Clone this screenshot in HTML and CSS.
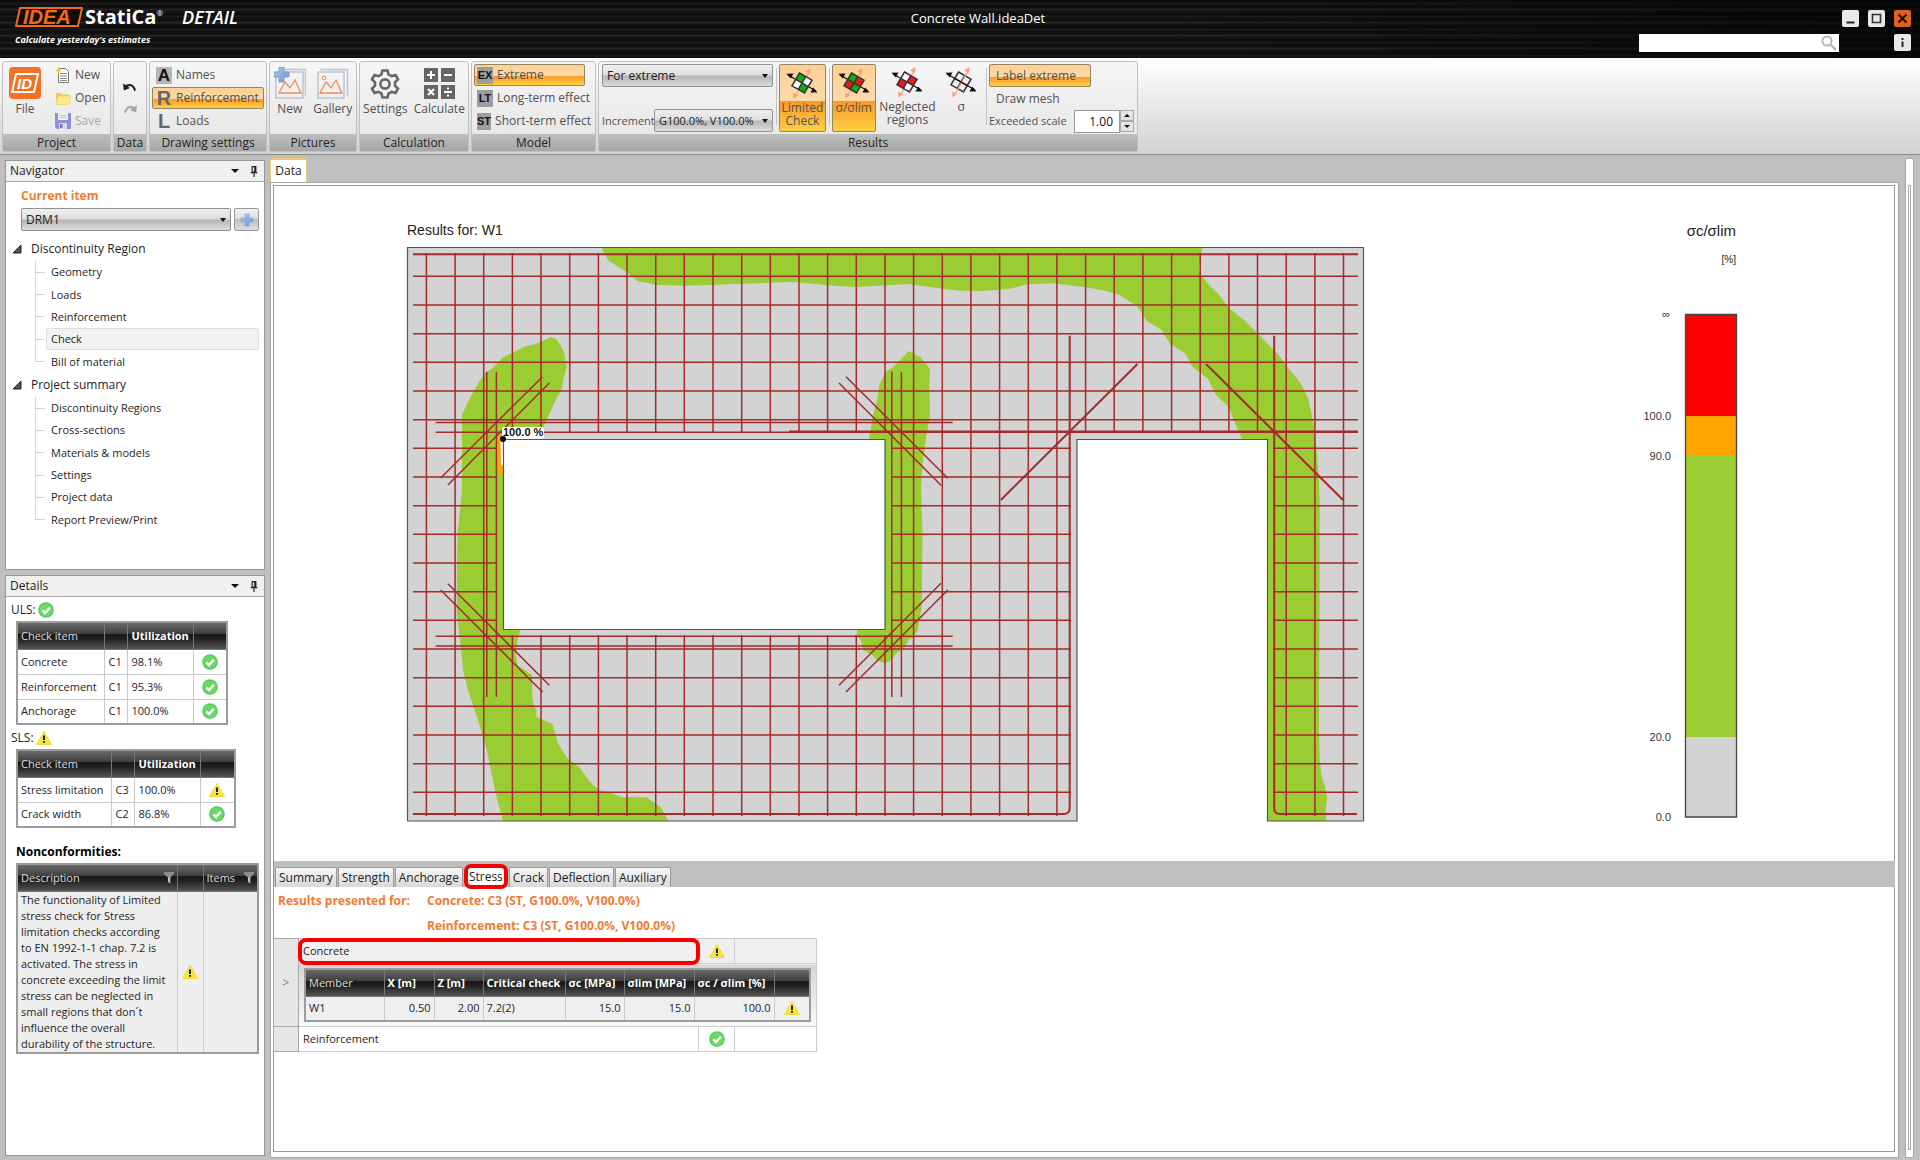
FILE: index.html
```html
<!DOCTYPE html>
<html lang="en">
<head>
<meta charset="utf-8">
<title>Concrete Wall.ideaDet</title>
<link rel="stylesheet" href="styles.css">
</head>
<body>
<svg class="defs" aria-hidden="true">
  <defs>
    <linearGradient id="blue" x1="0" y1="0" x2="1" y2="1"><stop offset="0" stop-color="#b4cdec"/><stop offset="1" stop-color="#5f93cf"/></linearGradient>
    <symbol id="ok" viewBox="0 0 16 16"><circle cx="8" cy="8" r="7.8" fill="#58cb58"/><circle cx="8" cy="8" r="6.4" fill="#6bd968"/><path d="M4.4 8.4l2.6 2.6 4.8-5.2" fill="none" stroke="#fff" stroke-width="2.4"/></symbol>
    <symbol id="warn" viewBox="0 0 16 16"><path d="M8 1.6L15.4 14.4H.6z" fill="#f7e73c" stroke="#ecd93a" stroke-width="1" stroke-linejoin="round"/><path d="M8 5.4v4.6" stroke="#222" stroke-width="2"/><path d="M7 11h2v1.800H7z" fill="#222"/></symbol>
    <symbol id="plus" viewBox="0 0 14 14"><path d="M5 1h4v4h4v4H9v4H5V9H1V5h4z" fill="url(#blue)" stroke="#86aedb" stroke-width=".8"/></symbol>
    <symbol id="pin" viewBox="0 0 8 12"><path d="M2 .7h4v6H2zM4.900 1v6M.4 7.300h7.200M4 7.500V12" fill="none" stroke="#222" stroke-width="1.300"/></symbol>
    <symbol id="funnel" viewBox="0 0 10 12"><path d="M0 0h10v2L6.500 5.500V12L4 10V5.500L0 2z" fill="#8a8a8a"/><path d="M4.500 5h1v6l-1-1z" fill="#eee"/></symbol>
    <symbol id="twist" viewBox="0 0 10 10"><path d="M9 1v8H1z" fill="#555" stroke="#222" stroke-width="1"/></symbol>
    <symbol id="arrows" viewBox="0 0 32 32">
      <path d="M10 28L23 5" stroke="#f9a37c" stroke-width="1.300"/><path d="M24.500 1l-.4 6-5-2.600zM7 31.500l.3-6 5 2.800z" fill="#f9a37c"/>
      <path d="M2 8l28 16" stroke="#111" stroke-width="1.200"/><path d="M.5 6.800l7-.2-2.700 5zM31.500 25.400l-7 .2 2.700-5z" fill="#111"/>
    </symbol>
    <symbol id="stress-box" viewBox="0 0 32 32"><path d="M13.500 6L26 13.200 18.500 26 6 18.800zM9.800 12.400l12.400 7.200M19.700 9.600l-7.400 12.800" fill="none" stroke="#333" stroke-width="1.500"/></symbol>
  </defs>
</svg>

<header class="titlebar">
  <div class="brand">
    <div class="brand-row">
      <svg class="logo" viewBox="0 0 70 22" role="img" aria-label="IDEA"><path d="M5 2h62l-4 18H1z" fill="#140a04" stroke="#f26b16" stroke-width="2" stroke-linejoin="round"/><text x="8" y="18" class="logo-text">IDEA</text></svg>
      <span class="brand-name">StatiCa<sup>®</sup></span>
      <span class="brand-app">DETAIL</span>
    </div>
    <div class="slogan">Calculate yesterday's estimates</div>
  </div>
  <h1 class="doc-title">Concrete Wall.ideaDet</h1>
  <div class="win">
    <div class="win-row">
      <button class="wbtn" aria-label="Minimize"><svg viewBox="0 0 17 17"><path d="M4.500 12.500h8" stroke="#222" stroke-width="2"/></svg></button>
      <button class="wbtn" aria-label="Maximize"><svg viewBox="0 0 17 17"><path d="M4.500 4.500h8v8h-8z" fill="none" stroke="#333" stroke-width="1.600"/></svg></button>
      <button class="wbtn close" aria-label="Close"><svg viewBox="0 0 17 17"><path d="M4.500 4.500l8 8M12.500 4.500l-8 8" stroke="#1a0a00" stroke-width="2"/></svg></button>
    </div>
    <div class="win-row">
      <label class="search"><input type="text" aria-label="Search"><svg viewBox="0 0 16 16"><circle cx="6" cy="6" r="4.600" fill="none" stroke="#b8b8b8" stroke-width="2"/><path d="M9.500 9.500L15 15" stroke="#b8b8b8" stroke-width="2.400"/></svg></label>
      <button class="wbtn" aria-label="Info"><svg viewBox="0 0 17 17"><path d="M8.500 4v2M8.500 7.500v5.500" stroke="#222" stroke-width="2"/></svg></button>
    </div>
  </div>
</header>

<div class="ribbon">
  <section class="group g-project">
    <div class="body">
      <button class="big"><svg class="file-icon" viewBox="0 0 32 32"><rect width="32" height="32" rx="4" fill="#f47022"/><path d="M7 7h22l-4 18H3z" fill="none" stroke="#fff" stroke-width="2"/><text x="8" y="22" class="file-text">ID</text></svg>File</button>
      <div class="sep"></div>
      <div class="stack">
        <button class="item"><svg class="i16" viewBox="0 0 16 16"><path d="M3.500 1.500h7l3 3v11h-10z" fill="#fff" stroke="#777"/><path d="M5 6.500h7M5 9h7M5 11.500h7M5 13.500h7" stroke="#888"/><path d="M3.500 0l1 2.500L7 3.500l-2.500 1-1 2.500-1-2.500L0 3.500l2.500-1z" fill="#f9c23c"/></svg>New</button>
        <button class="item"><svg class="i16" viewBox="0 0 16 16"><path d="M1 14V3h5l1 1.500h7V14z" fill="#eecb45"/><path d="M.5 14.500L3 6h12.800L14 14.500z" fill="#fbe98a" stroke="#e9ce58" stroke-width=".6"/></svg>Open</button>
        <button class="item off"><svg class="i16" viewBox="0 0 16 16"><path d="M0 0h16v16H2l-2-2z" fill="#7f7fdc"/><path d="M3 0h10v7H3z" fill="#f0f0e0"/><path d="M4 10h8v6H4z" fill="#d8d8e8"/><path d="M5 11h2.500v4H5z" fill="#5d5db8"/><path d="M4.500 2.500h7M4.500 4.500h7" stroke="#bbb"/></svg>Save</button>
      </div>
    </div>
    <h2>Project</h2>
  </section>
  <section class="group g-data">
    <div class="body undo">
      <button aria-label="Undo"><svg viewBox="0 0 16 11"><path d="M0 1l1 8 7-3-2.500-1.500Q10 2 13 10q2-1 1.500-3Q11 -1 3 2.500z" fill="#222"/></svg></button>
      <button aria-label="Redo" class="off"><svg viewBox="0 0 16 11"><path d="M16 1l-1 8-7-3 2.500-1.500Q6 2 3 10 1 9 1.500 7 5 -1 13 2.500z" fill="#999"/></svg></button>
    </div>
    <h2>Data</h2>
  </section>
  <section class="group g-draw">
    <div class="body stack">
      <button class="item"><span class="glyph boxed">A</span>Names</button>
      <button class="item on"><span class="glyph">R</span>Reinforcement</button>
      <button class="item"><span class="glyph">L</span>Loads</button>
    </div>
    <h2>Drawing settings</h2>
  </section>
  <section class="group g-pics">
    <div class="body even">
      <button class="big"><svg class="i30" viewBox="0 0 32 32"><path d="M5.500 2.500h26v27M3 5h26v26H2V6z" fill="none" stroke="#b9c3d3" stroke-width="1.500"/><path d="M5 26l6-11 5 6 5-8 6 13z" fill="none" stroke="#f58a55" stroke-width="1.300"/><path d="M5 0h5v5h5v5h-5v5H5v-5H0V5h5z" fill="url(#blue)" stroke="#6d9bd0" stroke-width=".8"/></svg>New</button>
      <button class="big"><svg class="i30" viewBox="0 0 32 32"><path d="M3.500 2.500h27v27M1 5h26v26H1z" fill="none" stroke="#b9c3d3" stroke-width="1.500"/><path d="M3 26l6-11 5 6 5-8 6 13z" fill="none" stroke="#f58a55" stroke-width="1.300"/><circle cx="7" cy="11" r="2" fill="none" stroke="#f58a55"/></svg>Gallery</button>
    </div>
    <h2>Pictures</h2>
  </section>
  <section class="group g-calc">
    <div class="body even">
      <button class="big"><svg class="i30" viewBox="0 0 32 32"><path d="M13.500 3.500h5l1 4 3 1.700 4-1.200 2.500 4.300-3 3v3.400l3 3-2.500 4.300-4-1.200-3 1.700-1 4h-5l-1-4-3-1.700-4 1.200L3 21.700l3-3v-3.400l-3-3L5.500 8l4 1.200 3-1.700z" fill="none" stroke="#666" stroke-width="2.600"/><circle cx="16" cy="17" r="4.600" fill="none" stroke="#666" stroke-width="2.600"/></svg>Settings</button>
      <button class="big"><svg class="i30" viewBox="0 0 32 32"><path d="M1 1h14v14H1zM18 1h14v14H18zM1 18h14v14H1zM18 18h14v14H18z" fill="#666"/><path d="M8 4v8M4 8h8M21 8h8M5 22l6 6M11 22l-6 6M21 25h8M25 20.500v2M25 27.500v2" stroke="#fff" stroke-width="2"/></svg>Calculate</button>
    </div>
    <h2>Calculation</h2>
  </section>
  <section class="group g-model">
    <div class="body stack">
      <button class="item on short"><span class="glyph code">EX</span>Extreme</button>
      <button class="item"><span class="glyph code">LT</span>Long-term effect</button>
      <button class="item"><span class="glyph code">ST</span>Short-term effect</button>
    </div>
    <h2>Model</h2>
  </section>
  <section class="group g-results">
    <div class="body">
      <div class="picks">
        <span class="select"><select aria-label="Results for"><option>For extreme</option></select></span>
        <div class="inc"><label for="inc">Increment</label><span class="select"><select id="inc"><option>G100.0%, V100.0%</option></select></span></div>
      </div>
      <div class="sep"></div>
      <button class="big tall on"><svg class="i30" viewBox="0 0 32 32"><use href="#arrows"/><path d="M13.500 6L26 13.200 18.500 26 6 18.800z" fill="#fff"/><path d="M13.500 6l6.200 3.600-3.700 6.400-6.200-3.600zM16 16l6.200 3.600-3.700 6.400-6.200-3.600z" fill="#0db10d"/><use href="#stress-box"/></svg>Limited<br>Check</button>
      <div class="sep"></div>
      <button class="big tall on slim"><svg class="i30" viewBox="0 0 32 32"><use href="#arrows"/><path d="M13.500 6l6.200 3.600-3.700 6.400-6.200-3.600zM16 16l6.200 3.600-3.700 6.400-6.200-3.600z" fill="#0db10d"/><path d="M19.700 9.600l6.300 3.600-3.800 6.400L16 16zM9.800 12.400L16 16l-3.700 6.400L6 18.800z" fill="#f01818"/><use href="#stress-box"/></svg>σ/σlim</button>
      <button class="big tall wide"><svg class="i30" viewBox="0 0 32 32"><use href="#arrows"/><path d="M13.500 6L26 13.200 18.500 26 6 18.800z" fill="#fff"/><path d="M19.700 9.600l6.300 3.600-3.800 6.400L16 16zM9.800 12.400L16 16l-3.700 6.400L6 18.800z" fill="#f01818"/><use href="#stress-box"/></svg>Neglected<br>regions</button>
      <button class="big tall slim"><svg class="i30" viewBox="0 0 32 32"><use href="#stress-box"/><use href="#arrows"/></svg>σ</button>
      <div class="sep"></div>
      <div class="opts">
        <button class="opt on">Label extreme</button>
        <button class="opt">Draw mesh</button>
        <div class="scale"><label for="scale">Exceeded scale</label><input id="scale" type="text" value="1.00"><span class="spin"><button aria-label="Increase" class="up"></button><button aria-label="Decrease" class="down"></button></span></div>
      </div>
    </div>
    <h2>Results</h2>
  </section>
</div>

<div class="work">
  <aside class="side">
    <section class="panel navigator">
      <header><h2>Navigator</h2><span class="caret"></span><svg class="pin"><use href="#pin"/></svg></header>
      <div class="nav-body">
        <label class="current" for="current">Current item</label>
        <div class="current-row"><span class="select"><select id="current"><option>DRM1</option></select></span><button class="add" aria-label="Add"><svg><use href="#plus"/></svg></button></div>
        <nav>
          <div class="branch"><svg><use href="#twist"/></svg>Discontinuity Region</div>
          <ul class="five">
            <li><a href="#">Geometry</a></li><li><a href="#">Loads</a></li><li><a href="#">Reinforcement</a></li><li><a href="#" class="sel">Check</a></li><li><a href="#">Bill of material</a></li>
          </ul>
          <div class="branch"><svg><use href="#twist"/></svg>Project summary</div>
          <ul class="six">
            <li><a href="#">Discontinuity Regions</a></li><li><a href="#">Cross-sections</a></li><li><a href="#">Materials &amp; models</a></li><li><a href="#">Settings</a></li><li><a href="#">Project data</a></li><li><a href="#">Report Preview/Print</a></li>
          </ul>
        </nav>
      </div>
    </section>
    <section class="panel details">
      <header><h2>Details</h2><span class="caret"></span><svg class="pin"><use href="#pin"/></svg></header>
      <div class="det-body">
        <div class="state">ULS: <svg class="st"><use href="#ok"/></svg></div>
        <table class="grid uls">
          <colgroup><col class="c-name"><col class="c-code"><col class="c-util"><col></colgroup>
          <thead><tr><th class="plain">Check item</th><th></th><th>Utilization</th><th></th></tr></thead>
          <tbody>
            <tr><td>Concrete</td><td>C1</td><td>98.1%</td><td class="ic"><svg class="st"><use href="#ok"/></svg></td></tr>
            <tr><td>Reinforcement</td><td>C1</td><td>95.3%</td><td class="ic"><svg class="st"><use href="#ok"/></svg></td></tr>
            <tr><td>Anchorage</td><td>C1</td><td>100.0%</td><td class="ic"><svg class="st"><use href="#ok"/></svg></td></tr>
          </tbody>
        </table>
        <div class="state">SLS: <svg class="st"><use href="#warn"/></svg></div>
        <table class="grid sls">
          <colgroup><col class="c-name"><col class="c-code"><col class="c-util"><col></colgroup>
          <thead><tr><th class="plain">Check item</th><th></th><th>Utilization</th><th></th></tr></thead>
          <tbody>
            <tr><td>Stress limitation</td><td>C3</td><td>100.0%</td><td class="ic"><svg class="st"><use href="#warn"/></svg></td></tr>
            <tr><td>Crack width</td><td>C2</td><td>86.8%</td><td class="ic"><svg class="st"><use href="#ok"/></svg></td></tr>
          </tbody>
        </table>
        <h3>Nonconformities:</h3>
        <table class="grid non">
          <colgroup><col class="c-desc"><col class="c-warn"><col></colgroup>
          <thead><tr><th class="plain"><span class="fl">Description<svg><use href="#funnel"/></svg></span></th><th></th><th class="plain"><span class="fl">Items<svg><use href="#funnel"/></svg></span></th></tr></thead>
          <tbody><tr><td>The functionality of Limited<br>stress check for Stress<br>limitation checks according<br>to EN 1992-1-1 chap. 7.2 is<br>activated. The stress in<br>concrete exceeding the limit<br>stress can be neglected in<br>small regions that don´t<br>influence the overall<br>durability of the structure.</td><td class="ic"><svg class="st"><use href="#warn"/></svg></td><td></td></tr></tbody>
        </table>
      </div>
    </section>
  </aside>

  <main class="center">
    <div class="page-tabs"><button class="page-tab">Data</button></div>
    <div class="frame">
      <svg class="drawing" viewBox="274 186 1620 675" role="img" aria-label="Results for W1">
        <text x="407" y="235" class="t14">Results for: W1</text>
        <path d="M407 247h957v574h-96V439h-191v382H407zM503 439v190.500h382V439z" fill="#d3d3d3" fill-rule="evenodd"/>
        <g fill="#9acd32">
          <path d="M600.700 247L608.900 261 627 272 637.500 281 656 284.700 684.600 285.700 790 282 799 282.500 836.400 286 856.800 287 908 284 942.500 288.700 960.500 290.700 982.600 291 1008.400 289 1028.400 284.300 1053 283.300 1085.500 287.300 1106.500 291 1119.600 295 1137.500 306.700 1146.800 321 1161.600 330 1170 343.700 1185.700 353.700 1192.600 367 1208 378.700 1215.700 394.700 1228.800 406.700 1234 421 1241.900 439 1268 439 1268 821 1325.900 821 1325.900 810 1327 796.700 1325 786 1321.800 776.700 1319.700 760 1319 730 1319.500 600 1319.700 506.700 1319 480 1317 453 1315 433 1311.400 413 1308 398 1300.400 382.700 1286.300 365.700 1278.700 355 1258 334 1246 321.700 1229 308 1218.500 294 1208 284 1201 275 1198.800 269 1202.600 247z"/>
          <path d="M550.700 337L556 339 560.700 345 564 353 566.800 366.700 562.900 381.700 561.400 391 557 396.700 549 415 543.600 426.700 541.800 439 503 439 503 629.500 520.700 629.500 517.900 638.300 515.700 653.300 517.500 665 532 675 532.500 700.700 536.400 710 536.400 716.700 552.500 724.300 557.900 743 566.800 757.700 580 768 590 782 599 790 611.400 793.300 622 797.300 646.400 797.300 660.700 807.300 668.600 821 503 821 496 795 486.400 748 475.700 713 467.900 690 463 670 461.400 651.700 456.800 613 457 560 457.900 530 461.800 493 462 415 467.900 401.700 479 381.700 486.400 371.700 491.800 369 502.500 357.700 526.800 345.700 532.900 345 547 339z"/>
          <path d="M908.900 351L921 357.700 930 369 929.300 388 930 415 925.700 440 922.900 463 921 486.700 922.500 533 921.800 606.700 917.900 630 913 637.700 908.600 640 904 649 897 652.700 890 660.700 885.400 663.300 877.500 660.700 871.400 654 864 650.700 860.700 640 857 635 857 629.500 885 629.500 885 439 869 439 872.900 416.700 877.500 398 879.300 385 885.400 372 893.600 366.700z"/>
        </g>
        <path d="M501 432l-4 5v31l6 8v-8l-2-4v-24l2-2z" fill="#ffa500"/><path d="M500.500 440h2.500v27l-2-3z" fill="#fff"/>
        <g fill="none" stroke="#a52a2a" stroke-width="1.500">
          <path d="M426.400 253V816M455.100 253V816M483.700 253V816M913.600 253V816M942.300 253V816M970.900 253V816M999.600 253V816M1028.300 253V816M1056.900 253V816M1286.200 253V816M1314.900 253V816M1343.500 253V816"/>
          <path d="M512.400 253V433M541 253V433M569.700 253V433M598.400 253V433M627 253V433M655.700 253V433M684.300 253V433M713 253V433M741.700 253V433M770.300 253V433M799 253V433M827.600 253V433M856.300 253V433M885 253V433M512.400 635V816M541 635V816M569.700 635V816M598.400 635V816M627 635V816M655.700 635V816M684.300 635V816M713 635V816M741.700 635V816M770.300 635V816M799 635V816M827.600 635V816M856.300 635V816M885 635V816"/>
          <path d="M1085.600 253V433M1114.200 253V433M1142.900 253V433M1171.600 253V433M1200.200 253V433M1228.900 253V433M1257.500 253V433"/>
          <path d="M413 276.300H1358M413 305H1358M413 333.700H1358M413 362.300H1358M413 391H1358M413 419.700H1358"/>
          <path d="M413 448.300H497M413 477H497M413 505.700H497M413 534.300H497M413 563H497M413 591.700H497M413 620.300H497M891 448.300H1071M891 477H1071M891 505.700H1071M891 534.300H1071M891 563H1071M891 591.700H1071M891 620.300H1071"/>
          <path d="M413 649H1071M413 677.700H1071M413 706.300H1071M413 735H1071M413 763.700H1071M413 792.300H1071"/>
          <path d="M1273 448.300H1358M1273 477H1358M1273 505.700H1358M1273 534.300H1358M1273 563H1358M1273 591.700H1358M1273 620.300H1358M1273 649H1358M1273 677.700H1358M1273 706.300H1358M1273 735H1358M1273 763.700H1358M1273 792.300H1358"/>
          <path d="M486.800 371.700V697M496.400 371.700V697M891.800 371.700V697M901.400 371.700V697M435.700 422.500H952.600M435.700 432.300H952.600M435.700 636.300H952.600M435.700 646H952.600"/>
          <path d="M542.500 376.700L440.700 478M549.300 383L447.900 485M846 376.700L947.800 478.300M839 383L941 485.300M447.900 583.700L549.300 685.300M440.700 590L542.500 692M941 583.300L839 685.300M947.800 590L846 692"/>
        </g>
        <g fill="none" stroke="#a52a2a" stroke-width="2">
          <path d="M413 254.300H1358M1137.500 364L1000.800 500M1206 364L1343 500"/>
          <path d="M1069.700 335.700V808q0 6-6 6H413M1274.200 335.700V808q0 6 6 6H1357"/>
          <path d="M789 431.700H1358" stroke-width="2.600"/>
        </g>
        <path d="M407.500 247.500h956v573.500h-96V439.500h-190.500v381.500H407.500zM503.500 439.500v190h381.500v-190z" fill="none" stroke="#555" stroke-width="1.200"/>
        <rect x="502" y="427" width="42" height="12" rx="2" fill="#fff"/><text x="503" y="436" class="t11b">100.0 %</text><circle cx="503" cy="439" r="3" fill="#000"/>
        <text x="1736" y="236" class="t15 end">σc/σlim</text>
        <text x="1736" y="263" class="t10 end">[%]</text>
        <path d="M1685.500 314.500h51v101.500h-51z" fill="red"/><path d="M1685.500 416h51v40h-51z" fill="orange"/><path d="M1685.500 456h51v281h-51z" fill="#9acd32"/><path d="M1685.500 737h51v80h-51z" fill="#d3d3d3"/>
        <path d="M1685.500 314.500h51v502.500h-51z" fill="none" stroke="#444" stroke-width="1.300"/>
        <g class="t11 end"><text x="1670" y="318">∞</text><text x="1671" y="420">100.0</text><text x="1671" y="460">90.0</text><text x="1671" y="741">20.0</text><text x="1671" y="821">0.0</text></g>
      </svg>
      <div class="tabs">
        <button>Summary</button><button>Strength</button><button>Anchorage</button><button class="active">Stress</button><button>Crack</button><button>Deflection</button><button>Auxiliary</button>
      </div>
      <div class="results">
        <dl class="presented"><dt>Results presented for:</dt><dd>Concrete: C3 (ST, G100.0%, V100.0%)</dd><dd>Reinforcement: C3 (ST, G100.0%, V100.0%)</dd></dl>
        <table class="outer">
          <colgroup><col class="o-head"><col class="o-name"><col class="o-icon"><col></colgroup>
          <tbody>
            <tr class="shade"><th rowspan="2">&gt;</th><td class="mark">Concrete</td><td class="ic"><svg class="st"><use href="#warn"/></svg></td><td></td></tr>
            <tr class="shade"><td colspan="3" class="nest">
              <table class="grid member">
                <colgroup><col class="m1"><col class="m2"><col class="m3"><col class="m4"><col class="m5"><col class="m6"><col class="m7"><col></colgroup>
                <thead><tr><th class="plain">Member</th><th>X [m]</th><th>Z [m]</th><th>Critical check</th><th>σc [MPa]</th><th>σlim [MPa]</th><th>σc / σlim [%]</th><th></th></tr></thead>
                <tbody><tr><td>W1</td><td class="num">0.50</td><td class="num">2.00</td><td>7.2(2)</td><td class="num">15.0</td><td class="num">15.0</td><td class="num">100.0</td><td class="ic"><svg class="st"><use href="#warn"/></svg></td></tr></tbody>
              </table>
            </td></tr>
            <tr><th></th><td>Reinforcement</td><td class="ic"><svg class="st"><use href="#ok"/></svg></td><td></td></tr>
          </tbody>
        </table>
      </div>
    </div>
  </main>
  <div class="dock"><div></div></div>
</div>
</body>
</html>
```
FILE: styles.css
```css
* { box-sizing: border-box; }
body { margin: 0; min-height: 100vh; display: flex; flex-direction: column; background: #bfbfbf; font: 12px/16px "Open Sans", "Noto Sans", sans-serif; color: #1e1e1e; }
button, input, select { font: inherit; color: inherit; margin: 0; padding: 0; border: 0; background: none; border-radius: 0; }
h1, h2, h3, ul, dl, dd { margin: 0; padding: 0; font-size: 12px; }
h1, h2 { font-weight: 400; }
svg { display: block; }
.defs { position: absolute; width: 0; height: 0; }

/* title bar */
.titlebar { display: grid; grid-template-columns: 1fr auto 1fr; height: 58px; color: #fff;
  background: linear-gradient(90deg, transparent 60%, rgba(0,0,0,.6)), repeating-linear-gradient(180deg, #0c0c0c 0 2px, #1c1c1c 3px 4px, #101010 5px 8px, #242424 9px 10px, #131313 11px 13px), #111; }
.brand { padding: 6px 0 0 15px; }
.brand-row { display: flex; align-items: center; height: 22px; }
.logo { width: 70px; height: 22px; overflow: visible; }
.logo-text { font: italic 700 20px "Liberation Sans", sans-serif; fill: #f26b16; }
.brand-name { font: 700 20px/22px "Open Sans", sans-serif; }
.brand-name sup { font-size: 8px; font-weight: 400; line-height: 8px; vertical-align: 8px; }
.brand-app { margin-left: 19px; font: italic 600 18px/22px "Open Sans", sans-serif; }
.slogan { padding-top: 5px; font: italic 700 9px/14px "Open Sans", sans-serif; }
.doc-title { padding: 10px 0 0 36px; font-size: 13px; }
.win { display: flex; flex-direction: column; gap: 7px; align-items: flex-end; padding: 10px 9px 0 0; }
.win-row { display: flex; gap: 9px; }
.wbtn { width: 17px; height: 17px; border-radius: 2px; background: #e9e9e9; }
.wbtn.close { background: #dd6420; }
.search { position: relative; width: 200px; height: 18px; margin-right: 46px; background: #fff; }
.search input { width: 100%; height: 18px; }
.search svg { position: absolute; right: 2px; top: 1px; width: 16px; height: 16px; }

/* ribbon */
.ribbon { display: flex; gap: 2px; height: 97px; padding: 3px 2px 2px; border-bottom: 1px solid #8c8c8c; background: linear-gradient(#fff, #d2d2d2); }
.group { display: flex; flex-direction: column; border: 1px solid #c0c0c0; border-radius: 3px; background: linear-gradient(#f6f6f6, #e6e4e5); color: #505050; }
.group h2 { height: 17px; line-height: 17px; text-align: center; color: #222; background: linear-gradient(#bcbfbe, #a4a7a6); }
.body { flex: 1; display: flex; padding: 2px 3px 0; }
.g-project { width: 109px; } .g-data { width: 34px; } .g-draw { width: 118px; } .g-pics { width: 88px; }
.g-calc { width: 110px; } .g-model { width: 125px; } .g-results { width: 540px; }
.stack { display: flex; flex-direction: column; gap: 1px; }
.item { display: flex; align-items: center; gap: 4px; height: 22px; padding: 0 3px; border: 1px solid transparent; border-radius: 2px; white-space: nowrap; }
.on { border: 1px solid #92855f; border-radius: 2px; background: linear-gradient(#fcd096, #fddaa8 55%, #f9982d 55%, #ffd040); }
.short { width: 111px; }
.off { color: #a8a8a8; }
.off svg { opacity: .85; }
.i16 { width: 16px; height: 16px; }
.i30 { width: 32px; height: 32px; }
.g-project .body { padding-left: 4px; }
.big { display: flex; flex-direction: column; align-items: center; line-height: 13px; padding-top: 3px; gap: 3px; }
.g-project .big { padding-left: 2px; }
.file-icon { width: 32px; height: 32px; }
.file-text { font: italic 700 15px "Liberation Sans", sans-serif; fill: #fff; }
.sep { width: 1px; margin: 4px 4px 9px 6px; background: #c4c4c4; }
.undo { flex-direction: column; align-items: center; gap: 11px; padding-top: 20px; }
.undo svg { width: 14px; height: 11px; }
.even { justify-content: space-around; padding: 2px 0 0; }
.glyph { width: 16px; height: 17px; font: 900 20px/17px "Liberation Sans", sans-serif; text-align: center; color: #666; }
.glyph.boxed { background: #b4b4b4; color: #111; font-size: 17px; }
.glyph.code { background: #9d9d9d; color: #111; font-size: 11px; }
.g-draw .body, .g-model .body { padding: 2px 2px 0; }
.g-model .item { padding: 0 2px; }
.g-results .sep { margin: 4px 2px 9px 3px; }
.picks { display: flex; flex-direction: column; gap: 22px; width: 172px; }
.select { position: relative; display: flex; flex: 1; height: 23px; }
.picks > .select { flex: none; }
.select select { flex: 1; min-width: 0; appearance: none; padding: 0 4px; color: #222; border: 1px solid #919191; border-radius: 2px; background: linear-gradient(#f0f0f0, #dedede 48%, #b5b5b5 52%, #dcdcdc); }
.select::after { content: ""; position: absolute; right: 5px; top: 10px; border: 3px solid transparent; border-top: 4px solid #111; border-bottom: 0; }
.inc { display: flex; align-items: center; font-size: 11px; }
.inc label { width: 52px; white-space: nowrap; }
.tall { height: 68px; width: 47px; padding-top: 2px; gap: 2px; }
.slim { width: 44px; } .wide { width: 64px; }
.opts { display: flex; flex-direction: column; }
.opt { width: 102px; height: 23px; padding: 0 7px; text-align: left; }
.opt.on { padding: 0 6px; }
.scale { display: flex; align-items: center; height: 22px; }
.scale label { width: 85px; white-space: nowrap; font-size: 11px; }
.scale input { width: 46px; height: 23px; padding-right: 6px; text-align: right; color: #111; background: #fff; border: 1px solid #999; }
.spin { display: flex; flex-direction: column; }
.spin button { display: grid; place-items: center; width: 14px; height: 11px; border: 1px solid #aaa; background: #e4e4e4; }
.spin button::before { content: ""; border: 3px solid transparent; border-bottom: 3px solid #111; border-top: 0; }
.spin .down::before { border-top: 3px solid #111; border-bottom: 0; }

/* work area */
.work { flex: 1; display: flex; padding: 3px 6px 2px 5px; }
.side { display: flex; flex-direction: column; gap: 5px; width: 260px; padding: 2px 0 2px; }
.panel { background: #fff; border: 1px solid #969696; }
.panel header { display: flex; align-items: center; height: 21px; padding: 0 6px 0 4px; border-bottom: 1px solid #a8a8a8; background: #f0f0f0; }
.panel h2 { flex: 1; }
.caret { border: 4px solid transparent; border-top: 4px solid #111; border-bottom: 0; }
.pin { width: 8px; height: 11px; margin-left: 11px; }
.navigator { height: 410px; }
.details { flex: 1; }
.nav-body { padding: 6px 5px 0 15px; }
.current { display: block; height: 20px; font-weight: 700; color: #f47a30; }
.current-row { display: flex; gap: 3px; }
.add { width: 25px; height: 23px; display: grid; place-items: center; border: 1px solid #999; border-radius: 2px; background: linear-gradient(#f0f0f0, #dedede 50%, #bfbfbf 50%, #dcdcdc); }
.add svg { width: 14px; height: 14px; }
nav { margin-left: -9px; padding-top: 6px; }
.branch { display: flex; align-items: center; gap: 9px; height: 24px; }
.branch svg { width: 10px; height: 10px; }
nav ul { list-style: none; display: grid; grid-auto-rows: 1fr; margin-left: 23px; font-size: 11px; }
.five { height: 112px; } .six { height: 134px; }
nav li { display: flex; align-items: center; background: linear-gradient(#d4d4d4, #d4d4d4) 0 50% / 10px 1px no-repeat, linear-gradient(#d4d4d4, #d4d4d4) 0 0 / 1px 100% no-repeat; }
nav li:last-child { background-size: 10px 1px, 1px 50%; }
nav a { flex: 1; margin-left: 11px; padding: 2px 4px; border: 1px solid transparent; border-radius: 2px; text-decoration: none; color: inherit; }
nav a.sel { border-color: #dedede; background: #f2f2f2; }
.st { width: 16px; height: 16px; }
.det-body { padding: 5px 5px 0 10px; }
.state { display: flex; gap: 2px; height: 19px; margin-left: -5px; }
h3 { font-weight: 700; color: #000; height: 19px; margin-top: 16px; }
.det-body table { margin-bottom: 5px; }

/* tables */
table { border-collapse: collapse; table-layout: fixed; }
.grid { border: 2px solid #9c9c9c; background: #fff; font-size: 11px; }
.grid th { height: 27px; padding: 0 3px; text-align: left; white-space: nowrap; color: #fff; border: 1px solid #777; background: linear-gradient(#6b6b6b, #3e3e3e 42%, #181818 42%, #202020 60%, #555); }
.grid .plain { font-weight: 400; color: #ddd; }
.grid td { height: 25px; padding: 0 3px; white-space: nowrap; border: 1px solid #cacaca; }
.grid td.ic, .ic { padding: 0; }
.ic .st { margin: 0 auto; }
.uls { width: 212px; } .uls .c-name { width: 87px; } .sls { width: 220px; } .sls .c-name { width: 94px; }
.c-code { width: 23px; } .c-util { width: 66px; }
.uls td:nth-child(2), .sls td:nth-child(2) { padding: 0 4px; }
.uls th:nth-child(3), .sls th:nth-child(3), .uls td:nth-child(3), .sls td:nth-child(3) { padding-left: 4px; }
.non { width: 243px; } .c-desc { width: 160px; } .c-warn { width: 26px; }
.non td { background: #eee; }
.fl { display: flex; justify-content: space-between; align-items: center; }
.fl svg { width: 10px; height: 12px; }

/* centre */
.center { flex: 1; display: flex; flex-direction: column; margin-left: 5px; }
.page-tabs { height: 24px; }
.page-tab { height: 24px; width: 37px; border: 1px solid #e8c878; border-top: 2px solid #f5c96a; border-bottom: 0; border-radius: 3px 3px 0 0; background: #fff; }
.frame { flex: 1; display: flex; flex-direction: column; background: #fff; border: 1px solid #a8a8a8; padding: 2px 3px 5px 2px; }
.drawing { width: 100%; height: auto; border: 1px solid #999; border-bottom: 0; }
.t15 { font: 15px "Liberation Sans", sans-serif; fill: #222; }
.t14 { font: 14px "Liberation Sans", sans-serif; fill: #222; }
.t11 { font: 11px "Liberation Sans", sans-serif; fill: #333; }
.t10 { font: 10px "Liberation Sans", sans-serif; fill: #222; }
.t11b { font: 700 11px "Liberation Sans", sans-serif; fill: #111; }
.end { text-anchor: end; }
.tabs { display: flex; gap: 1px; height: 26px; padding: 6px 0 0 1px; border-left: 1px solid #999; background: #bfbfbf; }
.tabs button { height: 20px; padding: 0 3px; border: 1px solid #9a9a9a; border-bottom: 0; border-radius: 2px 2px 0 0; background: linear-gradient(#f6f6f6, #d9d9d9); }
.tabs .active { position: relative; height: 25px; margin: -3px 0; padding: 0 1px; border: 4px solid #f50000; border-radius: 7px; background: #fff; line-height: 14px; }
.results { flex: 1; border: 1px solid #999; border-top: 0; padding-top: 1px; }
.presented { display: grid; grid-template-columns: 149px 1fr; grid-auto-rows: 25px; padding: 0 0 0 4px; line-height: 25px; font-weight: 700; color: #f47a30; }
.presented dd { grid-column: 2; }
.outer { width: 544px; margin-left: -1px; border: 1px solid #a0a0a0; }
.o-head { width: 25px; } .o-name { width: 400px; } .o-icon { width: 36px; }
.outer > tbody > tr > th { background: #e6e6e6; border: 1px solid #a8a8a8; color: #777; font-weight: 400; }
.outer > tbody > tr > td { height: 25px; padding: 0 4px; border: 1px solid #ccc; font-size: 11px; }
.outer > tbody > tr > td.ic { padding: 0; }
.shade td { background: #efefef; }
.outer > tbody > tr > td.mark { outline: 4px solid #f50000; outline-offset: -3px; border-radius: 7px; }
.outer > tbody > tr > td.nest { padding: 4px 5px; background: linear-gradient(#d5d5d5, #fafafa); }
.member { width: 100%; }
.m1 { width: 79px; } .m2 { width: 50px; } .m3 { width: 49px; } .m4 { width: 82px; } .m5 { width: 59px; } .m6 { width: 70px; } .m7 { width: 80px; }
.num { text-align: right; }
.dock { display: flex; justify-content: center; width: 9px; margin-left: 6px; padding: 26px 0 7px; border: 1px solid #aaa; border-radius: 2px; background: #fff; }
.dock div { width: 3px; border: 1px solid #aaa; }
```
